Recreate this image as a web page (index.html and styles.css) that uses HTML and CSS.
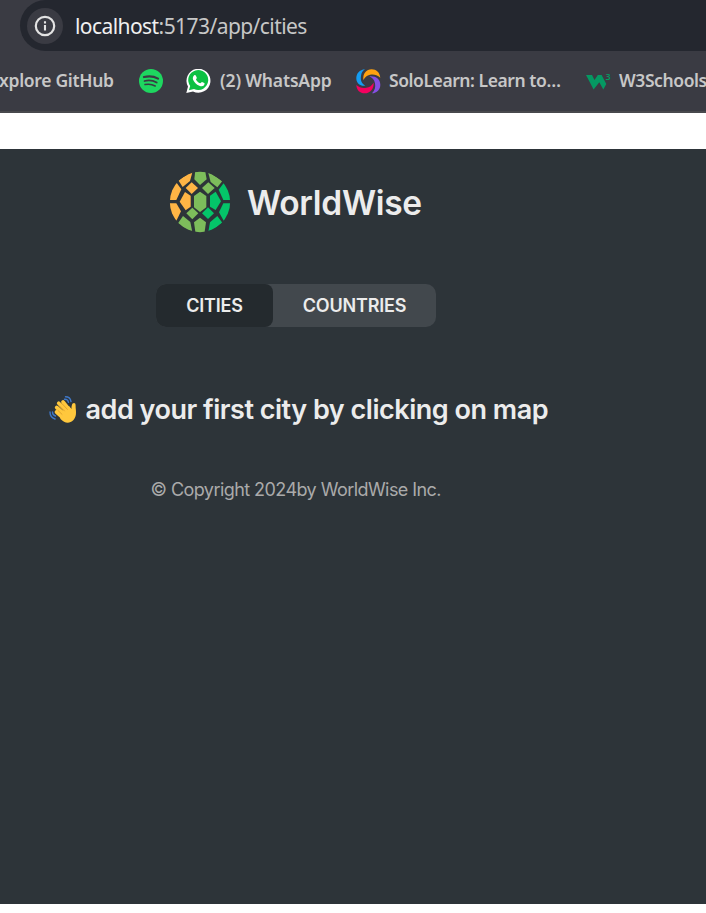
FILE: index.html
```
<!DOCTYPE html>
<html lang="en">
<head>
<meta charset="utf-8">
<title>WorldWise</title>
<link rel="stylesheet" href="styles.css">
</head>
<body>
<header class="browser">
  <div class="address">
    <span class="info"><svg width="22" height="22" viewBox="0 0 22 22"><circle cx="11" cy="11" r="9.2" fill="none" stroke="#e3e3e3" stroke-width="2.2"/><path d="M11 10v5.5M11 6.2v2.2" stroke="#e3e3e3" stroke-width="2.1"/></svg></span>
    <span class="url"><b>localhost</b>:5173/app/cities</span>
  </div>
  <nav class="bookmarks">
    <span class="mark github">xplore GitHub</span>
    <svg class="spotify" width="24" height="24" viewBox="0 0 24 24"><circle cx="12" cy="12" r="12" fill="#1ed760"/><g fill="none" stroke="#3a3b43" stroke-linecap="round"><path d="M4.9 8.1c4.800-1.300 10-.8 14.200 1.500" stroke-width="2.100"/><path d="M5.500 12c4.200-1.100 8.500-.6 12.200 1.500" stroke-width="1.800"/><path d="M6 15.600c3.600-.9 7.100-.4 10.200 1.400" stroke-width="1.500"/></g></svg>
    <svg class="whatsapp" width="25" height="24" viewBox="0 0 25 24"><path d="M.3 24 2 17.600A12 12 0 1 1 7 22.400Z" fill="#fff"/><path d="M2.900 21.300 4.200 17A10 10 0 1 1 8 20.100Z" fill="#0dc143"/><path d="M8.300 6.300c.6-.5 1.300-.3 1.600.4l.9 2c.2.500-.9 1.300-.8 1.700.8 1.800 2.300 3.200 4.200 3.900.5.100 1.300-1.500 1.800-1.300l2.300 1.100c.6.300.2 1.700-.5 2.400-.9.900-2.400 1.200-4.500.3-3-1.200-5.100-3.400-6.200-6-.7-1.800 0-3.600 1.200-4.500Z" fill="#fff"/></svg>
    <span class="mark wa">(2) WhatsApp</span>
    <svg class="solo" width="25" height="25" viewBox="0 0 75 75"><path d="M27 1C11 2 0 14 1 30c1 14 14 23 27 20-12-6-15-17-13-29 1-9 5-15 12-20Z" fill="#149df2"/><path d="M22 33C20 14 31 1 47 1c14 0 24 9 26 25-10-9-20-11-31-9-10 2-14 7-20 16Z" fill="#ffa20f"/><path d="M40 22c19-2 33 9 33 25 0 14-10 25-25 26 9-9 11-19 9-30-2-11-8-16-17-21Z" fill="#854fe3"/><path d="M53 41c1 18-10 32-27 32C12 73 2 64 1 48c9 8 19 10 30 8 10-1 17-7 22-15Z" fill="#f4005f"/></svg>
    <span class="mark sl">SoloLearn: Learn to…</span>
    <svg class="w3" width="25" height="26" viewBox="0 -4 25 26"><path d="M0 3h6l2.500 5L11.800 3h3.800l4.700 9-3 5.500-4-7.200-5.700 7.200Z" fill="#059862"/><text x="19.500" y="8" class="cube">3</text></svg>
    <span class="mark ws">W3Schools</span>
  </nav>
</header>
<main class="sidebar">
  <div class="content">
  <div class="logo">
    <svg width="62" height="62" viewBox="42 33 186 186"><defs><clipPath id="globe"><circle cx="135" cy="126" r="90.500"/></clipPath></defs><g clip-path="url(#globe)"><g fill="#ffb545"><path d="M63 66 79 88 64 120H40V90Z"/><path d="M40 130h24l14 24-14 28-24-25Z"/><path d="m70 61 43-27-8 29-22 18Z"/><path d="m110 67 19 17-19 18-18-18Z"/><path d="m90 96 17 11v33l-15 11-18-26Z"/></g><g fill="#7dbd5b"><path d="M121 30h29l5 28-20 17-17-17Z"/><path d="m159 35 43 28-15 19-20-16Z"/><path d="m160 67 19 17-20 18-18-18Z"/><path d="m135 95 19 13v34l-19 14-18-14v-34Z"/><path d="m112 143 18 17-18 18-18-18Z"/><path d="m84 168 22 18 7 35-45-30Z"/><path d="m135 173 18 14-5 35h-26l-5-35Z"/></g><g fill="#04c569"><path d="m208 67 22 20v33h-25l-14-31Z"/><path d="m182 95 16 29-16 26-17-10v-33Z"/><path d="M205 130h25v25l-23 29-15-27Z"/><path d="m159 142 18 18-18 17-18-17Z"/><path d="m187 168 15 20-43 33 6-34Z"/></g></g></svg>
    <span class="brand">WorldWise</span>
  </div>
  <nav class="tabs"><span class="tab active">CITIES</span><span class="tab">COUNTRIES</span></nav>
  <p class="message"><svg width="28" height="28" viewBox="0 0 28 28"><g fill="none" stroke="#3f78c8" stroke-width="1.400" stroke-linecap="round"><path d="M1 16c0 4 2 6 5 7M3.500 16c0 2 1 3.500 3 4M15.500 3.300c2-.2 3.500 1 4 3M16.500.8c3 0 5 1.800 5.500 4.800"/></g><g stroke="#ffc83d" stroke-width="3.700" stroke-linecap="round"><path d="m7.500 16 8 7M7.700 11.500l10 9M9.700 7.300l10 10M14 6l8 10"/></g><path d="m10 17 10-7 2.500 3c0-3 .4-6 2.500-6s1.500 3 1.800 6c.5 5 .2 8-2.300 11-4.500 4.500-9 3-13-1Z" fill="#ffc83d"/><path d="m8.700 14.200 4.600 4.400M10.200 9.700l5.500 5.500M13 7.600l5.700 6.100" stroke="#d99a2a" stroke-width=".8"/></svg><span>add your first city by clicking on map</span></p>
  <footer class="copyright">© Copyright 2024by WorldWise Inc.</footer>
  </div>
</main>
</body>
</html>
```
FILE: styles.css
```
* { box-sizing: border-box; }
body { margin: 0; width: 706px; height: 913px; overflow: hidden; background: #fff; font-family: Inter, sans-serif; }
.browser { height: 113px; background: #3a3b43; border-bottom: 2px solid #48494d; font-family: "Noto Sans", sans-serif; }
.address { height: 51px; margin-left: 20px; padding-left: 7px; background: #24272f; border-radius: 26px 0 0 26px; display: flex; align-items: center; }
.info { width: 36px; height: 36px; border-radius: 50%; background: #3a3b43; display: flex; align-items: center; justify-content: center; }
.url { margin-left: 12px; font-size: 21px; line-height: 28px; color: #c7c7c7; white-space: nowrap; letter-spacing: -0.57px; }
.url b { font-weight: 400; color: #f0f0f0; }
.bookmarks { height: 60px; display: flex; align-items: center; }
.bookmarks svg { flex: none; }
.mark { flex: none; white-space: nowrap; font-size: 17.5px; font-weight: 600; color: #c7c7c7; position: relative; top: -1px; }
.github { width: 139px; letter-spacing: -0.3px; text-indent: -1px; }
.whatsapp { margin: 0 9px 0 23px; }
.wa { width: 136px; letter-spacing: -0.15px; }
.sl { width: 197px; margin-left: 8px; letter-spacing: -0.43px; }
.ws { margin-left: 8px; letter-spacing: -0.4px; }
.cube { font: 600 9px "Noto Sans", sans-serif; fill: #059862; }
.sidebar { margin-top: 36px; height: 755px; background: #2d3439; }
.content { width: 592px; height: 755px; padding-top: 22px; display: flex; flex-direction: column; align-items: center; color: #ececec; }
.logo { display: flex; align-items: center; height: 62px; width: 254px; gap: 16px; }
.logo svg { flex: none; }
.brand { font-size: 33.5px; font-weight: 600; line-height: 40px; letter-spacing: -0.3px; padding-top: 2px; }
.tabs { margin-top: 51px; width: 280px; height: 43px; display: flex; background: #42484d; border-radius: 10px; overflow: hidden; font-size: 18px; font-weight: 600; letter-spacing: -0.2px; }
.tab { flex: 1; display: flex; align-items: center; justify-content: center; }
.active { flex: 0 0 117px; background: #242a2e; border-radius: 8px; }
.message { margin: 63px 0 0; height: 40px; width: 495px; display: flex; align-items: center; gap: 9px; font-size: 27px; font-weight: 600; letter-spacing: -0.48px; white-space: nowrap; }
.message svg { flex: none; }
.message span { position: relative; top: -1px; }
.copyright { margin-top: 47px; height: 26px; width: 291px; font-size: 18px; line-height: 26px; color: #aaa; white-space: nowrap; letter-spacing: -0.56px; }
```
